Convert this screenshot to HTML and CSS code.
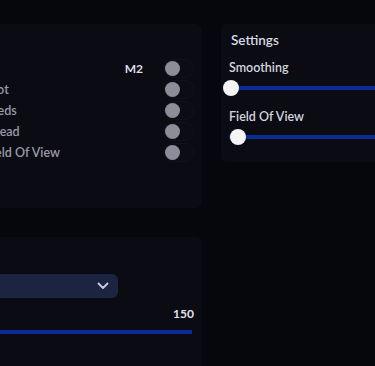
FILE: index.html
```html
<!DOCTYPE html>
<html>
<head>
    <title>Menu</title>
    <link rel="stylesheet" href="styles.css">
</head>
<body>
    <div class="menu">
        <div class="column">
            <section class="card card-aim">
                <h2 class="card-title">Aimbot</h2>
                <div class="row">
                    <span class="label">Enabled</span>
                    <span class="bind">M2</span>
                    <span class="toggle"><span class="knob"></span></span>
                </div>
                <div class="row">
                    <span class="label">Triggerbot</span>
                    <span class="toggle"><span class="knob"></span></span>
                </div>
                <div class="row">
                    <span class="label">Ignore Peds</span>
                    <span class="toggle"><span class="knob"></span></span>
                </div>
                <div class="row">
                    <span class="label">Ignore Dead</span>
                    <span class="toggle"><span class="knob"></span></span>
                </div>
                <div class="row">
                    <span class="label">Draw Field Of View</span>
                    <span class="toggle"><span class="knob"></span></span>
                </div>
            </section>

            <section class="card card-weapon">
                <h2 class="card-title">Target</h2>
                <div class="select">
                    <span class="select-text">Head</span>
                    <svg class="chevron" width="12" height="8" viewBox="0 0 12 8">
                        <path d="M1.5 1.5 L6 6 L10.5 1.5" fill="none" stroke="#c9cde0" stroke-width="1.8" stroke-linecap="round" stroke-linejoin="round"/>
                    </svg>
                </div>
                <div class="range-head">
                    <span class="label">Range</span>
                    <span class="range-value">150</span>
                </div>
                <div class="bar"></div>
            </section>
        </div>

        <section class="card card-settings">
            <h2 class="card-title">Settings</h2>
            <div class="field-label">Smoothing</div>
            <div class="slider">
                <div class="slider-track"></div>
                <span class="slider-knob" style="left: 0px"></span>
            </div>
            <div class="field-label">Field Of View</div>
            <div class="slider">
                <div class="slider-track"></div>
                <span class="slider-knob" style="left: 7px"></span>
            </div>
        </section>
    </div>
</body>
</html>
```

FILE: styles.css
```css
body {
    margin: 0;
    background: #06060d;
    font-family: Lato, "Noto Sans", sans-serif;
    overflow: hidden;
}
.menu {
    display: grid;
    grid-template-columns: 260px 200px;
    gap: 19px;
    align-items: start;
    margin-left: -58px;
    padding-top: 24px;
}
.column {
    display: flex;
    flex-direction: column;
    gap: 29px;
}
.card {
    background: #0b0b14;
    border-radius: 6px;
    padding: 8px 8px 0 10px;
    box-sizing: border-box;
}
.card-title {
    margin: 0 0 10px;
    font-size: 13.5px;
    line-height: 16px;
    font-weight: 600;
    color: #d9d9e2;
}
.card-aim {
    height: 184px;
}
.row {
    display: flex;
    align-items: center;
    height: 21px;
}
.label {
    flex: 1;
    font-size: 12.5px;
    font-weight: 600;
    color: #9b9ba8;
}
.bind {
    font-size: 12px;
    font-weight: 700;
    color: #dcdce6;
    margin-right: 21px;
}
.toggle {
    position: relative;
    width: 28px;
    height: 17px;
    border-radius: 9px;
    background: #0c0c15;
    border: 1px solid #12121b;
}
.knob {
    position: absolute;
    left: 0;
    top: 1px;
    width: 15px;
    height: 15px;
    border-radius: 50%;
    background: #8d8d99;
}
.card-weapon {
    height: 160px;
}
.select {
    display: flex;
    align-items: center;
    justify-content: space-between;
    height: 24px;
    margin-top: 13px;
    width: 166px;
    padding: 0 9px 0 10px;
    box-sizing: border-box;
    background: #1b2440;
    border-radius: 6px;
    font-size: 12px;
    color: #c9cde0;
}
.range-head {
    display: flex;
    align-items: center;
    margin-top: 8px;
    height: 15px;
}
.range-value {
    font-size: 12px;
    font-weight: 700;
    color: #e2e2ea;
}
.bar {
    height: 4px;
    margin-top: 9px;
    margin-right: 2px;
    background: #0b2c96;
}
.card-settings {
    height: 138px;
    padding-left: 8px;
}
.card-settings .card-title {
    margin-left: 2px;
    margin-bottom: 12px;
}
.field-label {
    font-size: 12.5px;
    line-height: 16px;
    font-weight: 600;
    color: #d4d4de;
}
.slider {
    position: relative;
    height: 16px;
    margin: 4px 0 13px -6px;
}
.slider-track {
    position: absolute;
    left: 6px;
    right: 0;
    top: 6px;
    height: 4px;
    background: #0b2c96;
}
.slider-knob {
    position: absolute;
    top: 0;
    width: 16px;
    height: 16px;
    border-radius: 50%;
    background: #f4f4f6;
}
```
